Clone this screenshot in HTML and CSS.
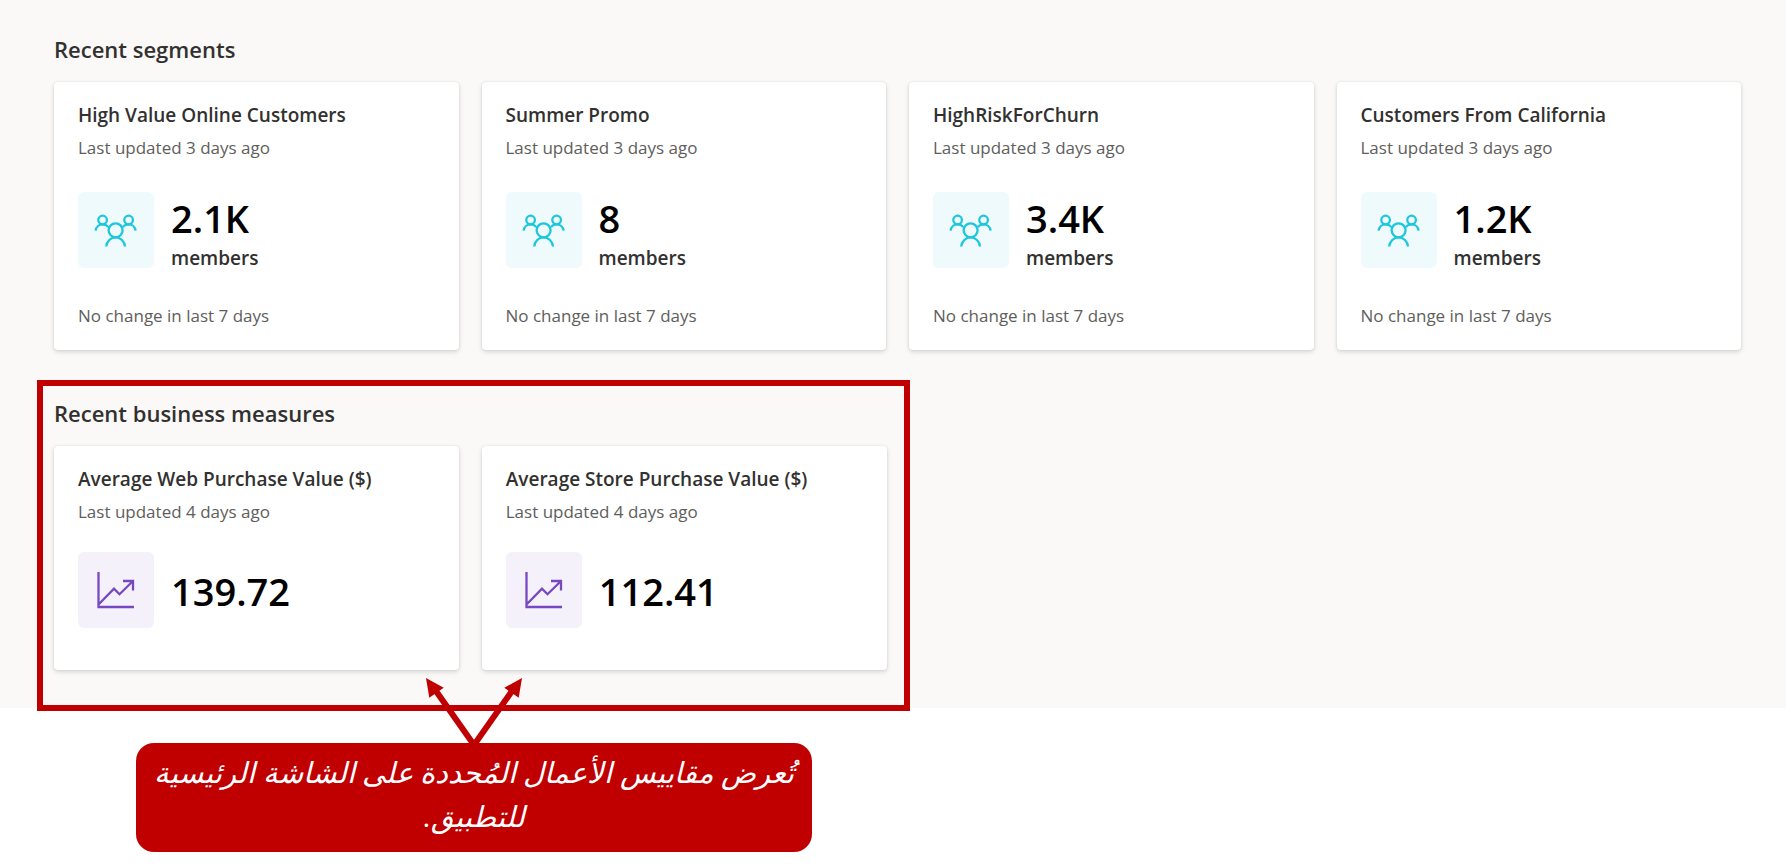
FILE: index.html
```html
<!DOCTYPE html>
<html lang="en">
<head>
<meta charset="utf-8">
<title>Home</title>
<link rel="stylesheet" href="styles.css">
</head>
<body>
<svg class="sprite" aria-hidden="true">
  <symbol id="people" viewBox="0 0 76 76">
    <g fill="none" stroke="#1cc7dd" stroke-width="2.300">
      <circle cx="24.6" cy="28" r="4.3"/>
      <circle cx="50.6" cy="28" r="4.3"/>
      <circle cx="37.6" cy="38.3" r="7"/>
      <path d="M17.6 38.6c.5-3.700 3.500-6.300 7-6.300 2.300 0 4.300 1 5.800 2.700M57.600 38.600c-.5-3.700-3.500-6.300-7-6.300-2.300 0-4.300 1-5.800 2.700M28.200 54.500c.5-5.200 4.500-9.200 9.400-9.200s8.900 4 9.400 9.200"/>
    </g>
  </symbol>
  <symbol id="trend" viewBox="0 0 76 76">
    <path fill="none" stroke="#7649c0" stroke-width="2.300" d="M20.500 20v35H56M21 52l15-15.300 5.500 5.500L54.500 29.500M45 29h10v9.500"/>
  </symbol>
</svg>
<main class="home">
  <section class="group">
    <h2 class="heading">Recent segments</h2>
    <div class="cards">
      <article class="card">
        <h3 class="title">High Value Online Customers</h3>
        <p class="note">Last updated 3 days ago</p>
        <div class="metric">
          <svg class="tile tile-people"><use href="#people"/></svg>
          <div class="count"><p class="value">2.1K</p><p class="unit">members</p></div>
        </div>
        <p class="note">No change in last 7 days</p>
      </article>
      <article class="card">
        <h3 class="title">Summer Promo</h3>
        <p class="note">Last updated 3 days ago</p>
        <div class="metric">
          <svg class="tile tile-people"><use href="#people"/></svg>
          <div class="count"><p class="value">8</p><p class="unit">members</p></div>
        </div>
        <p class="note">No change in last 7 days</p>
      </article>
      <article class="card">
        <h3 class="title">HighRiskForChurn</h3>
        <p class="note">Last updated 3 days ago</p>
        <div class="metric">
          <svg class="tile tile-people"><use href="#people"/></svg>
          <div class="count"><p class="value">3.4K</p><p class="unit">members</p></div>
        </div>
        <p class="note">No change in last 7 days</p>
      </article>
      <article class="card">
        <h3 class="title">Customers From California</h3>
        <p class="note">Last updated 3 days ago</p>
        <div class="metric">
          <svg class="tile tile-people"><use href="#people"/></svg>
          <div class="count"><p class="value">1.2K</p><p class="unit">members</p></div>
        </div>
        <p class="note">No change in last 7 days</p>
      </article>
    </div>
  </section>
  <section class="group highlighted">
    <h2 class="heading">Recent business measures</h2>
    <div class="cards cards-pair">
      <article class="card card-measure">
        <h3 class="title">Average Web Purchase Value ($)</h3>
        <p class="note">Last updated 4 days ago</p>
        <div class="metric">
          <svg class="tile tile-trend"><use href="#trend"/></svg>
          <p class="value">139.72</p>
        </div>
      </article>
      <article class="card card-measure">
        <h3 class="title">Average Store Purchase Value ($)</h3>
        <p class="note">Last updated 4 days ago</p>
        <div class="metric">
          <svg class="tile tile-trend"><use href="#trend"/></svg>
          <p class="value">112.41</p>
        </div>
      </article>
    </div>
  </section>
</main>
<aside class="callout" lang="ar" dir="rtl">
  <svg class="arrows" viewBox="0 0 96 67" aria-hidden="true">
    <path fill="none" stroke="#c00000" stroke-width="6" d="M10 13L48 67L86 13"/>
    <path fill="#c00000" d="M0 0L17.700 9.700L3.300 19.700ZM96 0L78.300 9.700L92.700 19.700Z"/>
  </svg>
  <p class="callout-text">تُعرض مقاييس الأعمال المُحددة على الشاشة الرئيسية للتطبيق.</p>
</aside>
</body>
</html>
```
FILE: styles.css
```css
body {
  margin: 0;
  background: #fff;
  color: #323130;
  font-family: "Open Sans", "Noto Sans", sans-serif;
}
h2, h3, p { margin: 0; }
.sprite { display: none; }
.home {
  display: flex;
  flex-direction: column;
  gap: 48px;
  padding: 34px 45px 38px 54px;
  background: #faf9f8;
}
.heading {
  margin-bottom: 18px;
  font-size: 22px;
  font-weight: 600;
  line-height: 30px;
}
.cards {
  display: grid;
  grid-template-columns: repeat(4, 1fr);
  gap: 23px;
}
.cards-pair { grid-template-columns: repeat(2, 1fr); }
.card {
  padding: 19px 24px 22px;
  border-radius: 4px;
  background: #fff;
  box-shadow: 0 2px 5px rgba(0, 0, 0, .14), 0 0 2px rgba(0, 0, 0, .1);
}
.title {
  margin-bottom: 7px;
  font-size: 19px;
  font-weight: 600;
  line-height: 28px;
}
.note {
  color: #605e5c;
  font-size: 17px;
  line-height: 24px;
}
.metric {
  display: flex;
  align-items: flex-start;
  gap: 17px;
  margin: 32px 0 31px;
}
.count { padding-top: 1px; }
.card-measure { padding-bottom: 42px; }
.card-measure .metric {
  align-items: center;
  margin: 28px 0 0;
}
.card-measure .value { padding-top: 2px; }
.tile {
  flex: none;
  width: 76px;
  height: 76px;
  border-radius: 6px;
}
.tile-people { background: #effafc; }
.tile-trend { background: #f5f1fb; }
.value {
  color: #000;
  font-size: 38px;
  font-weight: 600;
  line-height: 50px;
}
.unit {
  font-size: 19px;
  font-weight: 600;
  line-height: 30px;
}
.highlighted {
  position: relative;
  width: calc(50% - 11px);
}
.highlighted::after {
  content: "";
  position: absolute;
  inset: -18px -23px -41px -17px;
  border: 6px solid #c00000;
}
.callout {
  position: relative;
  box-sizing: border-box;
  max-width: 676px;
  margin: 35px 136px 14px;
  padding: 8px 12px 13px;
  border-radius: 18px;
  background: #c00000;
  color: #fff;
}
.callout-text {
  font-family: "Liberation Serif", "Times New Roman", serif;
  font-size: 29px;
  font-style: italic;
  line-height: 44px;
  text-align: center;
}
.arrows {
  position: absolute;
  bottom: calc(100% - 2px);
  left: calc(50% - 48px);
  width: 96px;
  height: 67px;
}
```
